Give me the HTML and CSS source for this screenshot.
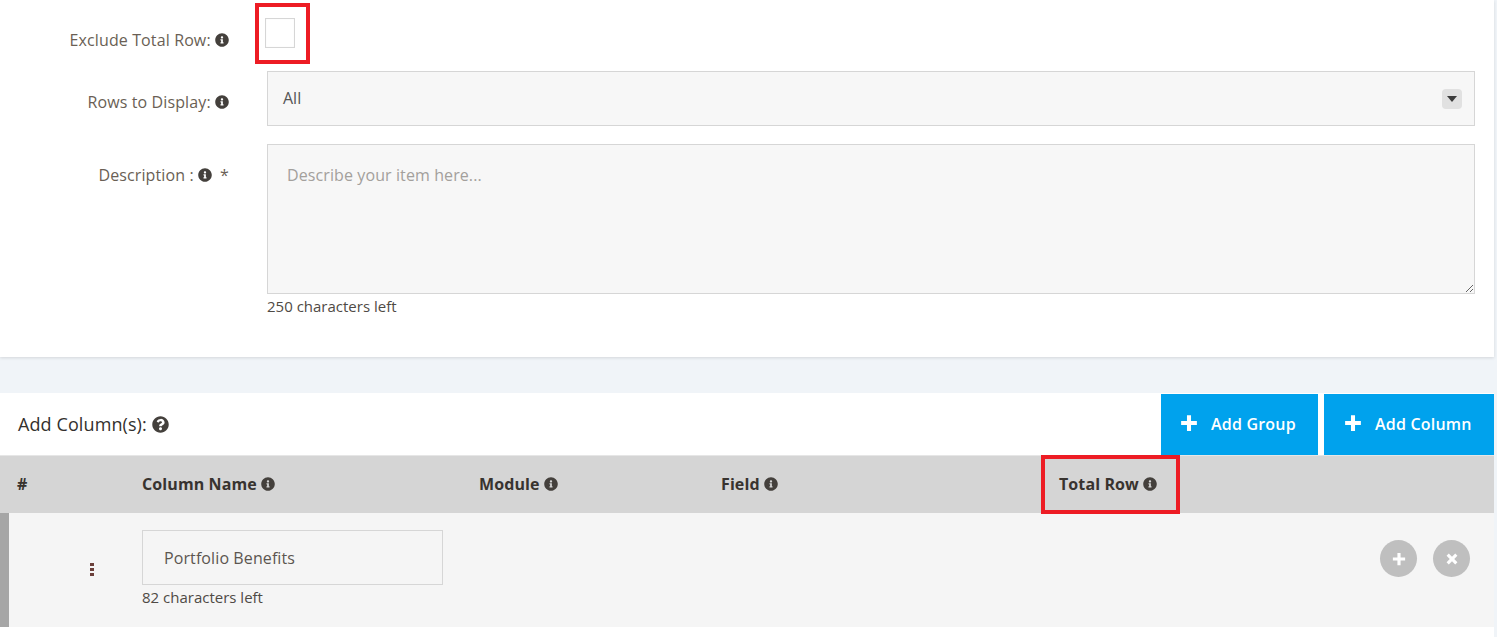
FILE: index.html
```html
<!DOCTYPE html>
<html lang="en">
<head>
    <meta charset="UTF-8">
    <title>Add Report</title>
    <link rel="stylesheet" href="styles.css">
</head>
<body>
    <svg class="defs" width="0" height="0">
        <symbol id="i-info" viewBox="0 0 512 512"><path d="M256 8C119.043 8 8 119.083 8 256c0 136.997 111.043 248 248 248s248-111.003 248-248C504 119.083 392.957 8 256 8zm0 110c23.196 0 42 18.804 42 42s-18.804 42-42 42-42-18.804-42-42 18.804-42 42-42zm56 254c0 6.627-5.373 12-12 12h-88c-6.627 0-12-5.373-12-12v-24c0-6.627 5.373-12 12-12h12v-64h-12c-6.627 0-12-5.373-12-12v-24c0-6.627 5.373-12 12-12h64c6.627 0 12 5.373 12 12v100h12c6.627 0 12 5.373 12 12v24z"/></symbol>
        <symbol id="i-help" viewBox="0 0 512 512"><path d="M504 256c0 136.997-111.043 248-248 248S8 392.997 8 256C8 119.083 119.043 8 256 8s248 111.083 248 248zM262.655 90c-54.497 0-89.255 22.957-116.549 63.758-3.536 5.286-2.353 12.415 2.715 16.258l34.699 26.31c5.205 3.947 12.621 3.008 16.665-2.122 17.864-22.658 30.113-35.797 57.303-35.797 20.429 0 45.698 13.148 45.698 32.958 0 14.976-12.363 22.667-32.534 33.976C247.128 238.528 216 254.941 216 296v4c0 6.627 5.373 12 12 12h56c6.627 0 12-5.373 12-12v-1.333c0-28.462 83.186-29.647 83.186-106.667 0-58.002-60.165-106-116.531-106zM256 338c-25.365 0-46 20.635-46 46 0 25.364 20.635 46 46 46s46-20.636 46-46c0-25.365-20.635-46-46-46z"/></symbol>
        <symbol id="i-plus" viewBox="0 0 16 16"><path d="M6.2 1h3.6v5.2H15v3.6H9.800V15H6.200V9.800H1V6.200h5.200z"/></symbol>
    </svg>

    <div class="card form-card">
        <div class="form-row row-check">
            <label class="form-label">Exclude Total Row: <svg class="ico"><use href="#i-info"/></svg></label>
            <div class="checkbox"></div>
        </div>
        <div class="form-row row-select">
            <label class="form-label">Rows to Display: <svg class="ico"><use href="#i-info"/></svg></label>
            <div class="select">
                <span>All</span>
                <span class="select-arrow"></span>
            </div>
        </div>
        <div class="form-row row-desc">
            <label class="form-label">Description : <svg class="ico"><use href="#i-info"/></svg><span class="req">*</span></label>
            <div class="form-control">
                <textarea class="textarea" placeholder="Describe your item here..."></textarea>
                <div class="hint">250 characters left</div>
            </div>
        </div>
        <div class="mark mark-check"></div>
    </div>

    <div class="card columns-card">
        <div class="columns-top">
            <div class="columns-title">Add Column(s): <svg class="ico ico-lg"><use href="#i-help"/></svg></div>
            <div class="columns-actions">
                <a class="btn-add btn-group"><svg class="btn-plus"><use href="#i-plus"/></svg>Add Group</a>
                <a class="btn-add btn-column"><svg class="btn-plus"><use href="#i-plus"/></svg>Add Column</a>
            </div>
        </div>
        <div class="table-head">
            <div>#</div>
            <div>Column Name <svg class="ico"><use href="#i-info"/></svg></div>
            <div>Module <svg class="ico"><use href="#i-info"/></svg></div>
            <div>Field <svg class="ico"><use href="#i-info"/></svg></div>
            <div>Total Row <svg class="ico"><use href="#i-info"/></svg></div>
            <div class="mark mark-total"></div>
        </div>
        <div class="table-row">
            <div class="grip"><i></i><i></i><i></i></div>
            <div class="name-cell">
                <input class="name-input" type="text" value="Portfolio Benefits">
                <div class="hint">82 characters left</div>
            </div>
            <div class="row-actions">
                <a class="round-btn"><svg><use href="#i-plus"/></svg></a>
                <a class="round-btn round-x"><svg><use href="#i-plus"/></svg></a>
            </div>
        </div>
    </div>
</body>
</html>
```

FILE: styles.css
```css
* {
    margin: 0;
    padding: 0;
    box-sizing: border-box;
}
html, body {
    height: 637px;
    overflow: hidden;
}
body {
    background: #f0f4f8;
    padding-right: 3px;
    font-family: "Open Sans", "Liberation Sans", sans-serif;
    font-size: 16px;
    color: #575757;
}
.defs {
    position: absolute;
}
.card {
    position: relative;
    background: #fff;
}
.ico {
    width: 14px;
    height: 14px;
    fill: #44403c;
    vertical-align: -1px;
}
.ico-lg {
    width: 17px;
    height: 17px;
    vertical-align: -2px;
}
.mark {
    position: absolute;
    border: 4px solid #ed1c24;
}

/* form */
.form-card {
    height: 357px;
    box-shadow: 0 1px 3px rgba(0, 0, 0, 0.12);
}
.form-row {
    display: flex;
}
.form-label {
    width: 230px;
    flex: none;
    padding-right: 1px;
    text-align: right;
    letter-spacing: 0.12px;
    line-height: 20px;
    color: #6a5f55;
}
.row-check {
    height: 71px;
    padding-top: 18px;
}
.row-check .form-label {
    padding-top: 12px;
}
.checkbox {
    width: 30px;
    height: 30px;
    margin-left: 35px;
    border: 1px solid #d6d6d6;
    box-shadow: inset 0 0 1px #e4e4e4;
}
.row-select {
    height: 73px;
}
.row-select .form-label {
    padding-top: 21px;
}
.select {
    display: flex;
    align-items: center;
    justify-content: space-between;
    width: 1208px;
    height: 55px;
    margin-left: 37px;
    padding: 0 12px 0 15px;
    background: #f7f7f7;
    border: 1px solid #d6d6d6;
    color: #555;
}
.select span:first-child {
    margin-top: -1px;
}
.select-arrow {
    position: relative;
    width: 20px;
    height: 20px;
    border-radius: 4px;
    background: #e1e1e1;
}
.select-arrow::after {
    content: "";
    position: absolute;
    left: 5px;
    top: 7px;
    border-style: solid;
    border-width: 6px 5px 0;
    border-color: #3c3c3c transparent transparent;
}
.row-desc .form-label {
    padding-top: 21px;
}
.req {
    margin-left: 8px;
}
.form-control {
    margin-left: 37px;
    width: 1208px;
}
.textarea {
    display: block;
    width: 1208px;
    height: 150px;
    padding: 20px 19px;
    resize: vertical;
    background: #f7f7f7;
    border: 1px solid #d6d6d6;
    border-radius: 0;
    outline: none;
    font-family: inherit;
    font-size: 16px;
    letter-spacing: 0.1px;
    line-height: 20px;
    color: #555;
}
.textarea::placeholder {
    color: #a3a09c;
    opacity: 1;
}
.hint {
    font-size: 15px;
    line-height: 20px;
    margin-top: 2px;
    color: #4f4a45;
}
.mark-check {
    left: 255px;
    top: 3px;
    width: 55px;
    height: 61px;
}

/* columns */
.columns-card {
    margin-top: 36px;
    height: 244px;
}
.columns-top {
    display: flex;
    justify-content: space-between;
    height: 63px;
    border-bottom: 1px solid #e6e6e6;
}
.columns-title {
    padding: 20px 0 0 18px;
    font-size: 18px;
    letter-spacing: 0.1px;
    line-height: 23px;
    color: #33302d;
}
.columns-actions {
    display: flex;
    gap: 6px;
    height: 61px;
    margin-top: 1px;
}
.btn-add {
    display: flex;
    align-items: center;
    padding-bottom: 2px;
    background: #00a2ed;
    color: #fff;
    font-size: 16px;
    letter-spacing: 0.2px;
    font-weight: 600;
}
.btn-group {
    width: 157px;
    padding-left: 19px;
}
.btn-column {
    width: 170px;
    padding-left: 20px;
}
.btn-plus {
    width: 18px;
    height: 18px;
    margin: -1px 13px 0 0;
    fill: #fff;
}
.table-head {
    position: relative;
    display: grid;
    grid-template-columns: 125px 337px 242px 338px 1fr;
    align-items: center;
    height: 57px;
    padding: 0 0 2px 17px;
    background: #d5d5d5;
    font-size: 16px;
    letter-spacing: 0.1px;
    font-weight: 700;
    color: #38332f;
}
.mark-total {
    left: 1041px;
    top: -1px;
    width: 139px;
    height: 59px;
}
.table-row {
    display: flex;
    height: 114px;
    background: #f5f5f5;
    border-left: 9px solid #a6a6a6;
}
.grip {
    display: flex;
    flex-direction: column;
    gap: 2px;
    width: 133px;
    padding: 50px 0 0 81px;
}
.grip i {
    display: block;
    width: 4px;
    height: 3px;
    background: #6b3f3a;
}
.name-cell {
    padding-top: 17px;
}
.name-input {
    display: block;
    width: 301px;
    height: 55px;
    padding: 0 21px;
    background: #f5f5f5;
    border: 1px solid #d6d6d6;
    border-radius: 0;
    outline: none;
    font-family: inherit;
    font-size: 16px;
    letter-spacing: 0.1px;
    color: #5c5650;
}
.name-cell .hint {
    margin-top: 2px;
}
.row-actions {
    display: flex;
    gap: 16px;
    margin-left: auto;
    padding: 27px 24px 0 0;
}
.round-btn {
    display: flex;
    align-items: center;
    justify-content: center;
    width: 37px;
    height: 37px;
    border-radius: 50%;
    background: #bfbfbf;
}
.round-btn svg {
    width: 14px;
    height: 14px;
    fill: #fff;
}
.round-x svg {
    transform: rotate(45deg);
}
```
